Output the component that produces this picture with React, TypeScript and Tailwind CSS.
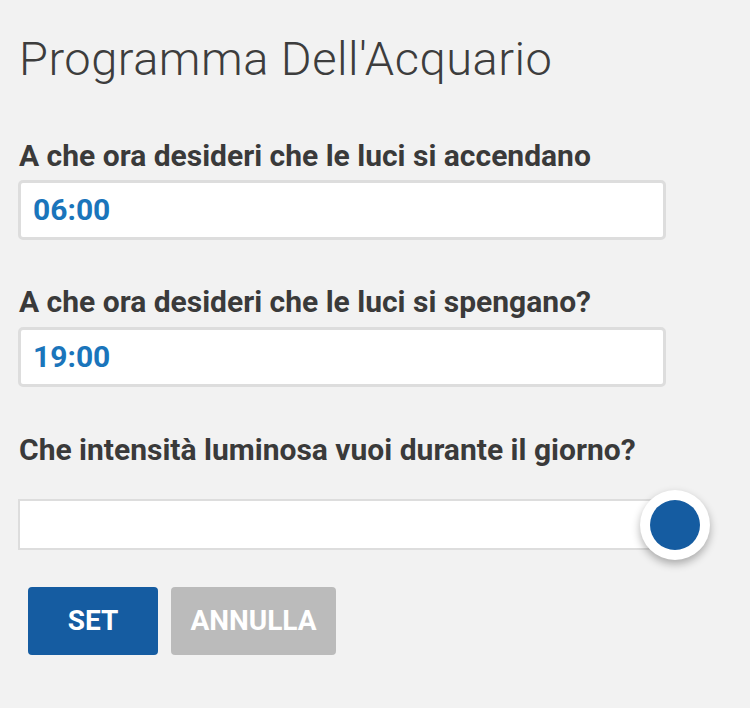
import React from "react";

export default function App() {
  return (
    <div className="w-[750px] h-[708px] bg-[#f2f2f2] overflow-hidden" style={{ fontFamily: "Roboto, 'Liberation Sans', sans-serif" }}>
      <div className="pl-[18px] pt-[31px]">
        <h1 className="text-[47px] leading-[56px] font-light text-[#3d3d3d] pl-[1px] tracking-[0.5px]">Programma Dell'Acquario</h1>
        <div className="mt-[51px] text-[30px] leading-[36px] font-bold text-[#3a3a3a] pl-[1px]">A che ora desideri che le luci si accendano</div>
        <div className="mt-[6px] w-[648px] h-[60px] border-[3px] border-[#dddddd] rounded-[5px] bg-white flex items-center pl-[12px]">
          <span className="text-[30px] leading-[36px] font-bold text-[#1a75bb]">06:00</span>
        </div>
        <div className="mt-[44px] text-[30px] leading-[36px] font-bold text-[#3a3a3a] pl-[1px]">A che ora desideri che le luci si spengano?</div>
        <div className="mt-[7px] w-[648px] h-[60px] border-[3px] border-[#dddddd] rounded-[5px] bg-white flex items-center pl-[12px]">
          <span className="text-[30px] leading-[36px] font-bold text-[#1a75bb]">19:00</span>
        </div>
        <div className="mt-[45px] text-[30px] leading-[36px] font-bold text-[#3a3a3a] pl-[1px]">Che intensità luminosa vuoi durante il giorno?</div>
        <div className="relative mt-[31px] w-[640px] h-[51px] border-2 border-[#dddddd] bg-white">
          <div className="absolute left-[620px] top-[-11px] w-[70px] h-[70px] rounded-full bg-white shadow-[0_4px_8px_rgba(0,0,0,0.3)] flex items-center justify-center">
            <div className="w-[50px] h-[50px] rounded-full bg-[#155ca1]" />
          </div>
        </div>
        <div className="mt-[37px] ml-[10px] flex gap-[13px]">
          <div className="w-[130px] h-[68px] rounded-[4px] bg-[#155ca1] flex items-center justify-center text-white text-[28px] font-bold">SET</div>
          <div className="w-[165px] h-[68px] rounded-[4px] bg-[#bbbbbb] flex items-center justify-center text-white text-[28px] font-bold">ANNULLA</div>
        </div>
      </div>
    </div>
  );
}
